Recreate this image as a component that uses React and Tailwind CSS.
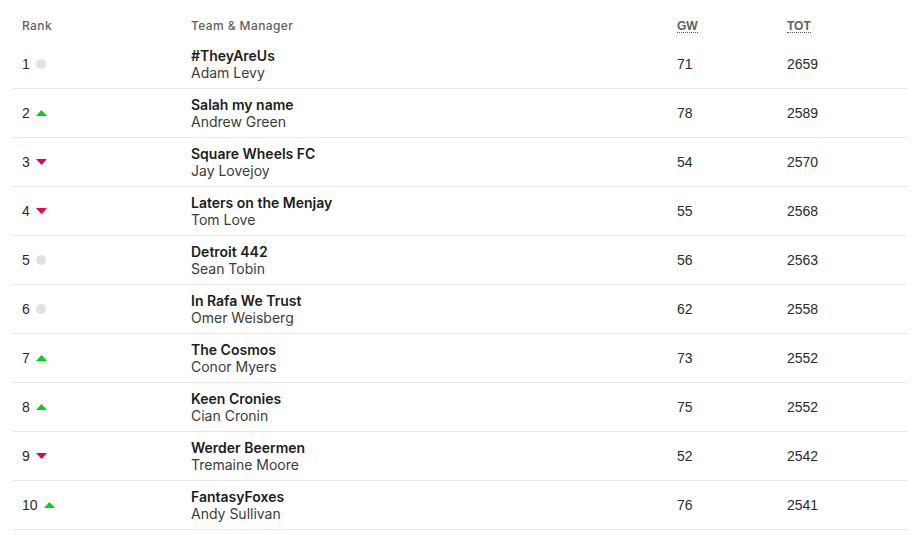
// Classic league standings table
import React from 'react';

const rows = [
  { rank: 1, move: 'same', team: '#TheyAreUs', manager: 'Adam Levy', gw: 71, tot: 2659 },
  { rank: 2, move: 'up', team: 'Salah my name', manager: 'Andrew Green', gw: 78, tot: 2589 },
  { rank: 3, move: 'down', team: 'Square Wheels FC', manager: 'Jay Lovejoy', gw: 54, tot: 2570 },
  { rank: 4, move: 'down', team: 'Laters on the Menjay', manager: 'Tom Love', gw: 55, tot: 2568 },
  { rank: 5, move: 'same', team: 'Detroit 442', manager: 'Sean Tobin', gw: 56, tot: 2563 },
  { rank: 6, move: 'same', team: 'In Rafa We Trust', manager: 'Omer Weisberg', gw: 62, tot: 2558 },
  { rank: 7, move: 'up', team: 'The Cosmos', manager: 'Conor Myers', gw: 73, tot: 2552 },
  { rank: 8, move: 'up', team: 'Keen Cronies', manager: 'Cian Cronin', gw: 75, tot: 2552 },
  { rank: 9, move: 'down', team: 'Werder Beermen', manager: 'Tremaine Moore', gw: 52, tot: 2542 },
  { rank: 10, move: 'up', team: 'FantasyFoxes', manager: 'Andy Sullivan', gw: 76, tot: 2541 },
];

// Movement indicator next to the rank
function Movement({ move }) {
  if (move === 'up') {
    return (
      <svg width="11" height="6" viewBox="0 0 11 6">
        <polygon points="5.5,0 11,6 0,6" fill="#00d11a" />
      </svg>
    );
  }
  if (move === 'down') {
    return (
      <svg width="11" height="6" viewBox="0 0 11 6">
        <polygon points="0,0 11,0 5.5,6" fill="#e90052" />
      </svg>
    );
  }
  return <span className="block w-[10px] h-[10px] rounded-full bg-[#e1e1e1]" />;
}

export default function App() {
  return (
    <div className="min-h-screen bg-white pl-3 font-['Liberation_Sans',Arial,sans-serif]">
      <div className="w-[895px]">
        {/* Header */}
        <div className="grid grid-cols-[179px_486px_110px_1fr] h-10 items-end pb-[6px] text-[12px] text-[#5f5f5f]">
          <div className="pl-[10px] font-['Inter',sans-serif] font-medium leading-4 tracking-[0.4px]">Rank</div>
          <div className="font-['Inter',sans-serif] font-medium leading-4 tracking-[0.4px]">Team &amp; Manager</div>
          <div className="leading-4">
            <span className="inline-block font-bold leading-3 border-b border-dotted border-[#555]">GW</span>
          </div>
          <div className="leading-4">
            <span className="inline-block font-bold leading-3 border-b border-dotted border-[#555]">TOT</span>
          </div>
        </div>
        {/* Rows */}
        {rows.map((r) => (
          <div
            key={r.rank}
            className="grid grid-cols-[179px_486px_110px_1fr] h-[49px] items-center border-b border-[#e6e6e6] text-[14px] text-[#2a2a2a]"
          >
            <div className="pl-[10px] flex items-center gap-[6px]">
              <span>{r.rank}</span>
              <Movement move={r.move} />
            </div>
            <div className="font-['Inter',sans-serif] leading-[17px]">
              <div className="font-semibold text-[#1c1c1c]">{r.team}</div>
              <div className="text-[#3a3a3a]">{r.manager}</div>
            </div>
            <div>{r.gw}</div>
            <div>{r.tot}</div>
          </div>
        ))}
      </div>
    </div>
  );
}
